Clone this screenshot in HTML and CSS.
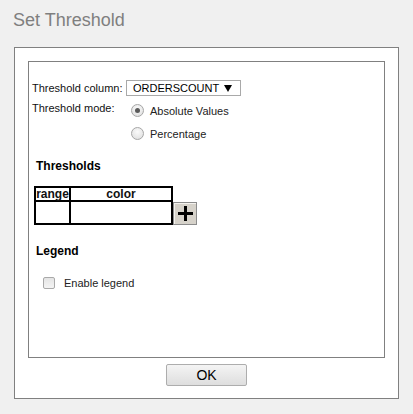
FILE: index.html
```html
<!DOCTYPE html>
<html lang="en">
<head>
<meta charset="utf-8">
<title>Set Threshold</title>
<link rel="stylesheet" href="styles.css">
</head>
<body>
<h1 class="title">Set Threshold</h1>
<div class="dialog">
  <div class="panel">
    <div class="form">
      <div class="label label-mid">Threshold column:</div>
      <div class="select">
        <span class="select-value">ORDERSCOUNT</span>
        <svg class="select-arrow" width="8" height="7" viewBox="0 0 8 7"><path d="M0 0H8L4 7Z" fill="#000"/></svg>
      </div>
      <div class="label label-top">Threshold mode:</div>
      <div class="options">
        <label class="option"><input class="radio" type="radio" name="mode" checked><span class="option-text">Absolute Values</span></label>
        <label class="option"><input class="radio" type="radio" name="mode"><span class="option-text">Percentage</span></label>
      </div>
    </div>

    <h2 class="section">Thresholds</h2>
    <div class="thresholds">
      <table class="grid">
        <thead>
          <tr><th class="col-range">range</th><th class="col-color">color</th></tr>
        </thead>
        <tbody>
          <tr><td></td><td></td></tr>
        </tbody>
      </table>
      <button class="add" type="button" aria-label="Add">
        <svg width="15" height="15" viewBox="0 0 15 15"><rect x="6" y="0" width="3" height="15" fill="#000"/><rect x="0" y="6" width="15" height="3" fill="#000"/></svg>
      </button>
    </div>

    <h2 class="section section-legend">Legend</h2>
    <label class="check"><input class="checkbox" type="checkbox"><span>Enable legend</span></label>
  </div>
  <div class="actions">
    <button class="ok" type="button">OK</button>
  </div>
</div>
</body>
</html>
```

FILE: styles.css
```css
* { box-sizing: border-box; }

body {
  margin: 0;
  background: #f0f0f0;
  font-family: "Liberation Sans", Arial, sans-serif;
  color: #111;
}

.title {
  margin: 0;
  height: 47px;
  padding: 10px 0 0 13px;
  font-size: 18px;
  font-weight: normal;
  line-height: 20px;
  color: #7f7f7f;
}

.dialog {
  margin-left: 14px;
  width: 385px;
  height: 352px;
  border: 1px solid #808080;
  background: #fff;
  padding: 13px 13px 12px;
}

.panel {
  height: 297px;
  border: 1px solid #808080;
  padding-top: 18px;
}

.form {
  display: grid;
  grid-template-columns: 94px auto;
  row-gap: 3px;
  padding-left: 3px;
  font-size: 11px;
  line-height: 13px;
}

.label-mid { align-self: center; }
.label-top { padding-top: 3px; }

.select {
  width: 115px;
  height: 16px;
  border: 1px solid #a9a9a9;
  display: flex;
  align-items: center;
  justify-content: space-between;
  padding: 0 8px 0 6px;
  color: #000;
}

.options {
  display: flex;
  flex-direction: column;
}

.option {
  height: 23px;
  display: flex;
  align-items: center;
  gap: 6px;
  color: #222;
}

.option-text { padding-top: 2px; }

.radio {
  appearance: none;
  -webkit-appearance: none;
  margin: 0 0 0 5px;
  width: 13px;
  height: 13px;
  border-radius: 50%;
  border: 1px solid #a6a6a6;
  background: radial-gradient(circle at 50% 35%, #fafafa 0%, #e8e8e8 60%, #dcdcdc 100%);
  position: relative;
}

.radio:checked::after {
  content: "";
  position: absolute;
  left: 3px;
  top: 3px;
  width: 5px;
  height: 5px;
  border-radius: 50%;
  background: #5a5a5a;
}

.section {
  margin: 14px 0 13px 7px;
  font-size: 12px;
  font-weight: bold;
  line-height: 14px;
  color: #000;
}

.section-legend {
  margin-top: 19px;
  margin-bottom: 18px;
}

.thresholds {
  display: flex;
  align-items: flex-end;
  margin-left: 5px;
}

.grid {
  border: 1px solid #000;
  border-spacing: 0;
  font-size: 12px;
}

.grid th,
.grid td {
  border: 1px solid #000;
  padding: 0;
}

.grid th {
  height: 14px;
  line-height: 12px;
  font-weight: bold;
  text-align: center;
}

.grid td { height: 23px; }

.col-range { width: 35px; text-align: left; }
.col-color { width: 102px; }

.add {
  width: 24px;
  height: 23px;
  margin: 0;
  padding: 0;
  border: 1px solid #8c8c8c;
  box-shadow: inset 1px 1px 0 #f4f2ee;
  background: #d6d2ca;
  display: flex;
  align-items: center;
  justify-content: center;
}

.check {
  display: flex;
  align-items: center;
  gap: 9px;
  margin-left: 14px;
  height: 14px;
  font-size: 11px;
  color: #222;
}

.checkbox {
  appearance: none;
  -webkit-appearance: none;
  margin: 0;
  width: 12px;
  height: 12px;
  border: 1px solid #a9a9a9;
  border-radius: 2px;
  background: linear-gradient(#e4e4e4, #f4f4f4);
}

.actions {
  margin-top: 6px;
  display: flex;
  justify-content: center;
}

.ok {
  width: 81px;
  height: 22px;
  margin: 0;
  border: 1px solid #adadad;
  border-radius: 2px;
  background: linear-gradient(#f4f4f4, #dedede);
  font-family: "Liberation Sans", Arial, sans-serif;
  font-size: 14px;
  color: #000;
  padding: 0;
}
```
